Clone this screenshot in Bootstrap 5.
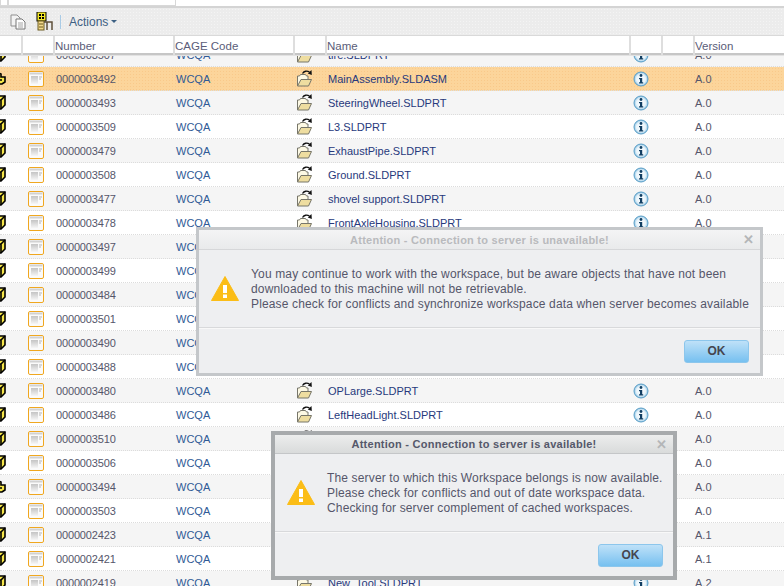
<!DOCTYPE html>
<html lang="en">
<head>
    <meta charset="UTF-8">
    <title>Workspace</title>
    <link href="https://cdn.jsdelivr.net/npm/bootstrap@5.3.0/dist/css/bootstrap.min.css" rel="stylesheet">
    <style>
        html, body { height: 100%; }
        body { width: 784px; height: 586px; overflow: hidden; background: #fff; font-family: "Liberation Sans", Arial, sans-serif; font-size: 11px; color: #555a6e; }

        /* top strip and toolbar */
        .top-strip { height: 8px; border-bottom: 2px solid #d4d4d4; }
        .top-strip span { display: inline-block; height: 6px; border: 1px solid #d8d8d8; border-top: 0; }
        .tool-bar { height: 27px; background-color: #ececec; background-image: radial-gradient(#f4f4f4 1px, transparent 1px); background-size: 3px 3px; padding-left: 10px; }
        .tool-sep { width: 1px; height: 14px; background: #a9cbe6; margin: 0 8px 0 7px; }
        .tool-actions { font-size: 12px; color: #3d6083; }
        .tool-caret { width: 0; height: 0; border: 3px solid transparent; border-top: 3px solid #3d6083; border-bottom: 0; margin-left: 3px; }

        /* grid */
        .grid-head { height: 20px; position: relative; z-index: 2; background: #fff; border-top: 1px solid #d9d9d9; box-shadow: inset 0 -2px 0 #c6c6c6, 0 1px 0 #e2e2e2; }
        .grid-head > div { border-left: 2px solid #dedede; padding: 4px 0 0 0; font-size: 11.5px; line-height: 13px; color: #5a5c78; }
        .grid-head > div:first-child { border-left: 0; }
        .grid-body { height: 531px; overflow: hidden; }
        .grid-rows { margin-top: -12px; }
        .grid-row { height: 24px; line-height: 24px; border-bottom: 1px dotted #dcdcdc; background: #fff; }
        .grid-row:nth-child(odd) { background: #f5f5f5; }
        .grid-row.row-active { background-color: #fcd59b; background-image: radial-gradient(#f9c98a 1px, transparent 1px); background-size: 3px 3px; }

        .c-a { width: 21px; }
        .c-b { width: 32px; }
        .c-num { width: 120px; }
        .c-cage { width: 120px; }
        .c-open { width: 32px; }
        .c-name { width: 304px; }
        .c-info { width: 32px; }
        .c-blank { width: 32px; }
        .c-ver { width: 91px; }
        .grid-row > div { flex: none; overflow: visible; white-space: nowrap; position: relative; }
        .grid-row .c-num { padding-left: 3px; color: #55566a; letter-spacing: -.15px; }
        .grid-row .c-cage { padding-left: 3px; color: #2f5a96; }
        .grid-row .c-name { padding-left: 3px; color: #27397c; }
        .grid-row .c-ver { padding-left: 2px; color: #55566a; }
        .grid-row svg { display: block; }
        .ic-cube { margin: 4px 0 0 -9px; }
        .ic-doc { margin: 4px 0 0 7px; }
        .ic-open { margin: 2px 0 0 2px; }
        .ic-info { margin: 4px 0 0 4px; }

        /* dialogs */
        .dlg { position: absolute; z-index: 5; display: flex; flex-direction: column; background: #eeeff1; border: 3px solid #c4c7ca; font-size: 12px; line-height: 15px; color: #55566a; letter-spacing: .15px; }
        .dlg-one { left: 196px; top: 227px; width: 567px; height: 149px; }
        .dlg-two { left: 271px; top: 431px; width: 406px; height: 149px; border: 4px solid #a7aaac; }
        .dlg-title { height: 20px; flex: none; background: linear-gradient(#f4f4f5, #e9eaeb); border-bottom: 1px solid #d6d7d9; text-align: center; font-weight: 700; font-size: 11px; line-height: 21px; position: relative; color: #b9babd; letter-spacing: .25px; }
        .dlg-two .dlg-title { height: 19px; line-height: 18px; background: linear-gradient(#eceded, #d9dbdb); border-bottom-color: #c4c6c8; color: #55586a; }
        .dlg-x { position: absolute; right: 6px; top: 0; font-size: 13px; line-height: 19px; color: #b4b6b8; }
        .dlg-body { height: 78px; flex: none; border-bottom: 1px solid #d8d9db; padding-left: 12px; }
        .dlg-text { margin-left: 12px; padding-top: 2px; white-space: nowrap; }
        .dlg-foot { flex: 1; padding: 11px 11px 0 0; border-top: 1px solid #f8f8f8; }
        .dlg-two .dlg-foot { padding-right: 10px; }
        .dlg-ok.btn { width: 65px; height: 23px; padding: 0; font-size: 12px; font-weight: 700; line-height: 21px; color: #45454f; border: 1px solid #8cc6ec; border-radius: 3px; background: linear-gradient(#bfe1f8, #76c0f0); }
    </style>
</head>
<body>
    <svg width="0" height="0" class="position-absolute">
        <symbol id="i-cube" viewBox="0 0 15 15">
            <path d="M1 5 5 1h9v9l-4 4H1z" fill="#f6e64a" stroke="#000" stroke-width="1.6"/>
            <path d="M1 5h9v9M10 5l4-4" fill="none" stroke="#000" stroke-width="1.6"/>
        </symbol>
        <symbol id="i-hand" viewBox="0 0 15 15">
            <path d="M0 6h5l2-4 3 1v3h4v5l-3 2H3L0 11z" fill="#f6e64a" stroke="#000" stroke-width="1.6"/>
            <path d="M5 9h6" fill="none" stroke="#000" stroke-width="1.3"/>
        </symbol>
        <symbol id="i-doc" viewBox="0 0 16 16">
            <defs><linearGradient id="g-doc" x1="0" y1="0" x2="0" y2="1"><stop offset="0" stop-color="#c4c4c4"/><stop offset="1" stop-color="#f6f6f6"/></linearGradient></defs>
            <rect x=".5" y=".5" width="15" height="15" rx="1.5" fill="#fafafa" stroke="#f0a71f"/>
            <rect x="1.500" y="1.500" width="13" height="2" fill="#d2d2d2"/>
            <rect x="3" y="5" width="7" height="8" fill="url(#g-doc)"/>
            <path d="M11 6h3M11 8h2" stroke="#b5b5b5"/>
        </symbol>
        <symbol id="i-open" viewBox="0 0 18 19">
            <path d="M2.500 17V7h2l1-1.500h5l1 1.500h1.500v3" fill="#fdf9e4" stroke="#77766a"/>
            <path d="M2.500 17 6 10.500h10.500L13.500 17z" fill="#eedda0" stroke="#77766a"/>
            <path d="M7.500 4.500C9 2 12 1.500 14.500 3" fill="none" stroke="#111" stroke-width="1.300"/>
            <path d="M16.500 1 16.800 6 12.800 4.500z" fill="#111"/>
        </symbol>
        <symbol id="i-info" viewBox="0 0 16 16">
            <defs><radialGradient id="g-info" cx=".5" cy=".5" r=".55"><stop offset="0" stop-color="#fff"/><stop offset=".6" stop-color="#e8f4fb"/><stop offset="1" stop-color="#6fb3dc"/></radialGradient></defs>
            <circle cx="8" cy="8" r="7" fill="url(#g-info)" stroke="#5b9ec6"/>
            <circle cx="8" cy="4.500" r="1.400" fill="#123f63"/>
            <path d="M6 7h3.200v4.300h1v1.200H6v-1.200h1V8.200H6z" fill="#123f63"/>
        </symbol>
        <symbol id="i-warn" viewBox="0 0 28 25">
            <path d="M14 .5 27.500 24.500H.5z" fill="#fbbd17" stroke="#fbbd17" stroke-linejoin="round"/>
            <rect x="12" y="9" width="4" height="8" fill="#fff"/>
            <rect x="12" y="18.500" width="4" height="3.500" fill="#fff"/>
        </symbol>
    </svg>

    <div class="top-strip d-flex">
        <span style="width: 8px"></span><span style="width: 168px"></span>
    </div>

    <div class="tool-bar d-flex align-items-center">
        <svg width="17" height="16" viewBox="0 0 17 16" style="margin-right: 9px">
            <path d="M1 1h6l3 3v8H1z" fill="#f2f2f2" stroke="#8f8f8f"/>
            <path d="M6 5h6l3 3v7H6z" fill="#fdfdfd" stroke="#777"/>
            <path d="M8 9h5M8 11h5M8 13h5" stroke="#a5a5a5"/>
        </svg>
        <svg width="17" height="19" viewBox="0 0 17 19">
            <rect x="1" y="0" width="9" height="9" fill="#f5e928" stroke="#000"/>
            <path d="M3 2h2v2H3zM6 2h2v2H6zM3 5h2v2H3zM6 5h2v2H6z" fill="#000"/>
            <rect x="2" y="9" width="6" height="9" fill="#f3d98b" stroke="#6a5a20"/>
            <path d="M3 12h4M3 15h4" stroke="#6a5a20"/>
            <path d="M8 10h8v8M11 10v8" fill="none" stroke="#5d4f3a" stroke-width="1.500"/>
        </svg>
        <div class="tool-sep"></div>
        <span class="tool-actions">Actions</span>
        <span class="tool-caret"></span>
    </div>

    <div class="grid-head d-flex">
        <div class="c-a"></div>
        <div class="c-b"></div>
        <div class="c-num">Number</div>
        <div class="c-cage">CAGE Code</div>
        <div class="c-open"></div>
        <div class="c-name">Name</div>
        <div class="c-info"></div>
        <div class="c-blank"></div>
        <div class="c-ver">Version</div>
    </div>

    <div class="grid-body">
        <div class="grid-rows" id="gridRows"></div>
    </div>

    <div class="dlg dlg-one">
        <div class="dlg-title">Attention - Connection to server is unavailable!<span class="dlg-x">&#10005;</span></div>
        <div class="dlg-body d-flex align-items-center">
            <svg width="28" height="25" class="flex-shrink-0"><use href="#i-warn"/></svg>
            <div class="dlg-text">You may continue to work with the workspace, but be aware objects that have not been<br>downloaded to this machine will not be retrievable.<br>Please check for conflicts and synchronize workspace data when server becomes available</div>
        </div>
        <div class="dlg-foot d-flex justify-content-end"><button class="btn dlg-ok">OK</button></div>
    </div>

    <div class="dlg dlg-two">
        <div class="dlg-title">Attention - Connection to server is available!<span class="dlg-x">&#10005;</span></div>
        <div class="dlg-body d-flex align-items-center">
            <svg width="28" height="25" class="flex-shrink-0"><use href="#i-warn"/></svg>
            <div class="dlg-text">The server to which this Workspace belongs is now available.<br>Please check for conflicts and out of date workspace data.<br>Checking for server complement of cached workspaces.</div>
        </div>
        <div class="dlg-foot d-flex justify-content-end"><button class="btn dlg-ok">OK</button></div>
    </div>

    <script>
        // number, file name (blank where a dialog covers it), version
        const rows = [
            ["0000003507", "tire.SLDPRT", "A.0"],
            ["0000003492", "MainAssembly.SLDASM", "A.0"],
            ["0000003493", "SteeringWheel.SLDPRT", "A.0"],
            ["0000003509", "L3.SLDPRT", "A.0"],
            ["0000003479", "ExhaustPipe.SLDPRT", "A.0"],
            ["0000003508", "Ground.SLDPRT", "A.0"],
            ["0000003477", "shovel support.SLDPRT", "A.0"],
            ["0000003478", "FrontAxleHousing.SLDPRT", "A.0"],
            ["0000003497", "", "A.0"],
            ["0000003499", "", "A.0"],
            ["0000003484", "", "A.0"],
            ["0000003501", "", "A.0"],
            ["0000003490", "", "A.0"],
            ["0000003488", "", "A.0"],
            ["0000003480", "OPLarge.SLDPRT", "A.0"],
            ["0000003486", "LeftHeadLight.SLDPRT", "A.0"],
            ["0000003510", "", "A.0"],
            ["0000003506", "", "A.0"],
            ["0000003494", "", "A.0"],
            ["0000003503", "", "A.0"],
            ["0000002423", "", "A.1"],
            ["0000002421", "", "A.1"],
            ["0000002419", "New_Tool.SLDPRT", "A.2"]
        ];
        const assemblies = ["0000003492", "0000003494"];

        document.getElementById("gridRows").innerHTML = rows.map(r => `
            <div class="grid-row d-flex${r[0] === "0000003492" ? " row-active" : ""}">
                <div class="c-a"><svg class="ic-cube" width="15" height="15"><use href="#${assemblies.includes(r[0]) ? "i-hand" : "i-cube"}"/></svg></div>
                <div class="c-b"><svg class="ic-doc" width="16" height="16"><use href="#i-doc"/></svg></div>
                <div class="c-num">${r[0]}</div>
                <div class="c-cage">WCQA</div>
                <div class="c-open"><svg class="ic-open" width="18" height="19"><use href="#i-open"/></svg></div>
                <div class="c-name">${r[1]}</div>
                <div class="c-info"><svg class="ic-info" width="16" height="16"><use href="#i-info"/></svg></div>
                <div class="c-blank"></div>
                <div class="c-ver">${r[2]}</div>
            </div>`).join("");
    </script>
    <script src="https://cdn.jsdelivr.net/npm/bootstrap@5.3.0/dist/js/bootstrap.bundle.min.js"></script>
</body>
</html>
